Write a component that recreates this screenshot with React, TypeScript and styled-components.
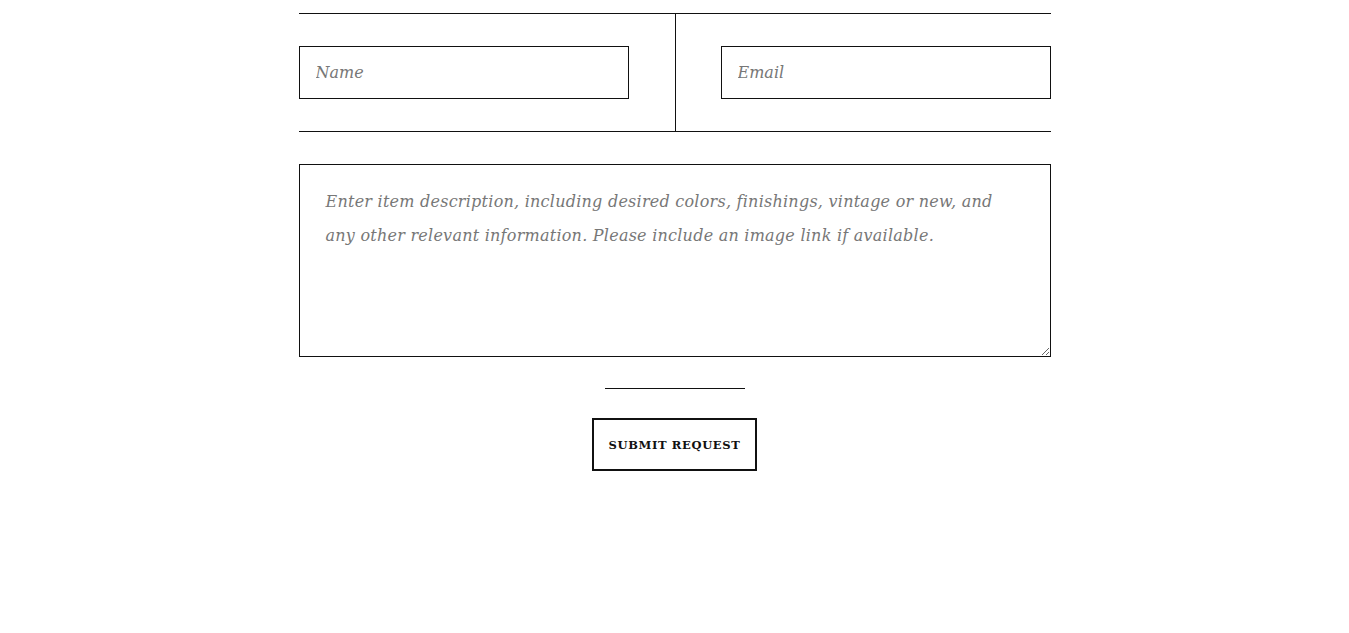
import React from 'react';
import styled, { createGlobalStyle } from 'styled-components';

const GlobalStyle = createGlobalStyle`
  html, body {
    margin: 0;
    padding: 0;
    background: #fff;
  }
  body {
    font-family: "DejaVu Serif", "Liberation Serif", serif;
    color: #111;
  }
`;

const Form = styled.form`
  width: 752px;
  margin: 0 auto;
  padding-top: 13px;
  display: flex;
  flex-direction: column;
  align-items: center;
`;

const FieldRow = styled.div`
  width: 100%;
  display: grid;
  grid-template-columns: 1fr 1fr;
  border-top: 1px solid #111;
  border-bottom: 1px solid #111;
`;

const FieldCell = styled.div<{ $side: 'left' | 'right' }>`
  display: flex;
  justify-content: ${p => (p.$side === 'left' ? 'flex-start' : 'flex-end')};
  padding: 32px 0;
  border-left: ${p => (p.$side === 'right' ? '1px solid #111' : 'none')};
`;

const TextInput = styled.input`
  box-sizing: border-box;
  width: 330px;
  height: 53px;
  border: 1px solid #111;
  border-radius: 0;
  padding: 0 16px;
  font-family: "DejaVu Serif", "Liberation Serif", serif;
  font-style: italic;
  font-size: 16px;
  color: #333;
  outline: none;

  &::placeholder {
    color: #777;
  }
`;

const Description = styled.textarea`
  box-sizing: border-box;
  width: 100%;
  height: 193px;
  margin-top: 32px;
  border: 1px solid #111;
  border-radius: 0;
  padding: 20px 26px;
  font-family: "DejaVu Serif", "Liberation Serif", serif;
  font-style: italic;
  font-size: 16px;
  line-height: 34px;
  letter-spacing: 0.24px;
  color: #333;
  outline: none;

  &::placeholder {
    color: #777;
  }
`;

const Rule = styled.hr`
  width: 140px;
  height: 0;
  margin: 31px 0 29px;
  border: none;
  border-top: 1px solid #111;
`;

const SubmitButton = styled.button`
  box-sizing: border-box;
  height: 53px;
  padding: 0 15px;
  background: #fff;
  border: 2px solid #111;
  border-radius: 0;
  font-family: "DejaVu Serif", "Liberation Serif", serif;
  font-weight: 700;
  font-size: 11.5px;
  letter-spacing: 0.65px;
  text-transform: uppercase;
  color: #111;
  cursor: pointer;
`;

const App: React.FC = () => {
  return (
    <>
      <GlobalStyle />
      <Form onSubmit={e => e.preventDefault()}>
        <FieldRow>
          <FieldCell $side="left">
            <TextInput type="text" placeholder="Name" />
          </FieldCell>
          <FieldCell $side="right">
            <TextInput type="email" placeholder="Email" />
          </FieldCell>
        </FieldRow>
        <Description placeholder="Enter item description, including desired colors, finishings, vintage or new, and any other relevant information. Please include an image link if available." />
        <Rule />
        <SubmitButton type="submit">Submit Request</SubmitButton>
      </Form>
    </>
  );
};

export default App;
